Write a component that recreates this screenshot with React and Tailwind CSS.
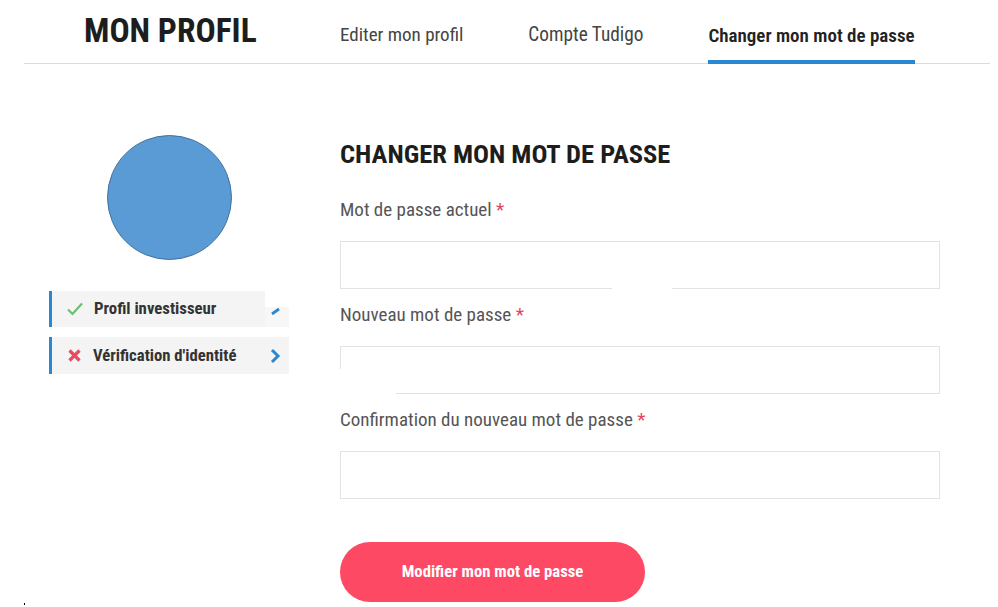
import React from "react";

const cond = { fontFamily: '"Liberation Sans Narrow", "Roboto Condensed", "DejaVu Sans Condensed", Roboto, sans-serif' };

function Field({ label, gap }) {
  return (
    <div className="flex flex-col">
      <label className="text-[19px] leading-[24px] text-[#555]">
        {label} <span className="text-[#e2455f]">*</span>
      </label>
      <div className="relative mt-[19px] h-[48px] w-[600px] border border-[#e3e3e3] bg-white">
        {gap === 1 && <span className="absolute -bottom-px left-[271px] h-[2px] w-[60px] bg-white" />}
        {gap === 2 && (
          <>
            <span className="absolute -left-px top-[22px] h-[26px] w-[2px] bg-white" />
            <span className="absolute -bottom-px -left-px h-[2px] w-[56px] bg-white" />
          </>
        )}
      </div>
    </div>
  );
}

export default function App() {
  return (
    <div className="relative h-[607px] w-[998px] overflow-hidden bg-white" style={cond}>
      {/* Header */}
      <div className="ml-[24px] mr-[8px] flex h-[64px] items-end border-b border-[#dcdcdc]">
        <h1 className="mb-[13px] ml-[60px] w-[256px] text-[33.5px] font-bold leading-[38px] text-[#1d1d1d]">MON PROFIL</h1>
        <nav className="flex items-end text-[19px] leading-[24px] text-[#444]">
          <span className="mb-[16px] mr-[65px]">Editer mon profil</span>
          <span className="mb-[16px] mr-[65px] text-[19.3px]">Compte Tudigo</span>
          <span className="-mb-px border-b-[4px] border-[#2a87d0] pb-[12px] font-semibold text-[#222]">Changer mon mot de passe</span>
        </nav>
      </div>

      <div className="flex">
        {/* Sidebar */}
        <aside className="ml-[49px] w-[240px] pt-[71px]">
          <div className="ml-[58px] h-[125px] w-[125px] rounded-full border-[1.5px] border-[#41719c] bg-[#5b9bd5]" />
          <div className="mt-[31px] flex h-[36px] items-center border-l-[3px] border-[#2a87d0]">
            <div className="flex h-full w-[213px] items-center bg-[#f4f4f4] pl-[14px]">
              <svg width="18" height="16" viewBox="0 0 18 16" fill="none">
                <path d="M2 8.5 L6.5 13 L16 2.5" stroke="#6cbf72" strokeWidth="2.2" />
              </svg>
              <span className="ml-[10px] text-[16.8px] font-bold text-[#333]">Profil investisseur</span>
            </div>
            <div className="flex h-full w-[24px] items-end bg-white">
              <div className="flex h-[20px] w-full items-start bg-[#f7f7f7] pl-[6px]">
                <svg width="10" height="8" viewBox="0 0 10 8"><path d="M1 7 L8 2" stroke="#2a87d0" strokeWidth="2.8" /></svg>
              </div>
            </div>
          </div>
          <div className="mt-[10px] flex h-[37px] items-center border-l-[3px] border-[#2a87d0]">
            <div className="flex h-full w-[237px] items-center bg-[#f4f4f4] pl-[15px]">
              <svg width="15" height="15" viewBox="0 0 15 15">
                <path d="M2.5 2.5 L12.5 12.5 M12.5 2.5 L2.5 12.5" stroke="#ea4a62" strokeWidth="3.2" />
              </svg>
              <span className="ml-[11px] text-[16.7px] font-bold text-[#333]">Vérification d'identité</span>
              <svg className="ml-auto mr-[8px]" width="12" height="16" viewBox="0 0 12 16" fill="none">
                <path d="M3 2 L9 8 L3 14" stroke="#2a87d0" strokeWidth="3" />
              </svg>
            </div>
          </div>
        </aside>

        {/* Form */}
        <main className="ml-[51px] pt-[75px]">
          <h2 className="text-[26.5px] font-bold leading-[30px] text-[#1d1d1d]">CHANGER MON MOT DE PASSE</h2>
          <div className="mt-[29px] flex flex-col gap-[14px]">
            <Field label="Mot de passe actuel" gap={1} />
            <Field label="Nouveau mot de passe" gap={2} />
            <Field label="Confirmation du nouveau mot de passe" />
          </div>
          <button className="mt-[43px] flex h-[60px] w-[305px] items-center justify-center rounded-full bg-[#fd4963] text-[16.7px] font-bold text-white">
            Modifier mon mot de passe
          </button>
        </main>
      </div>
      <span className="absolute left-[24px] top-[603px] h-[2px] w-[1px] bg-black" />
    </div>
  );
}
